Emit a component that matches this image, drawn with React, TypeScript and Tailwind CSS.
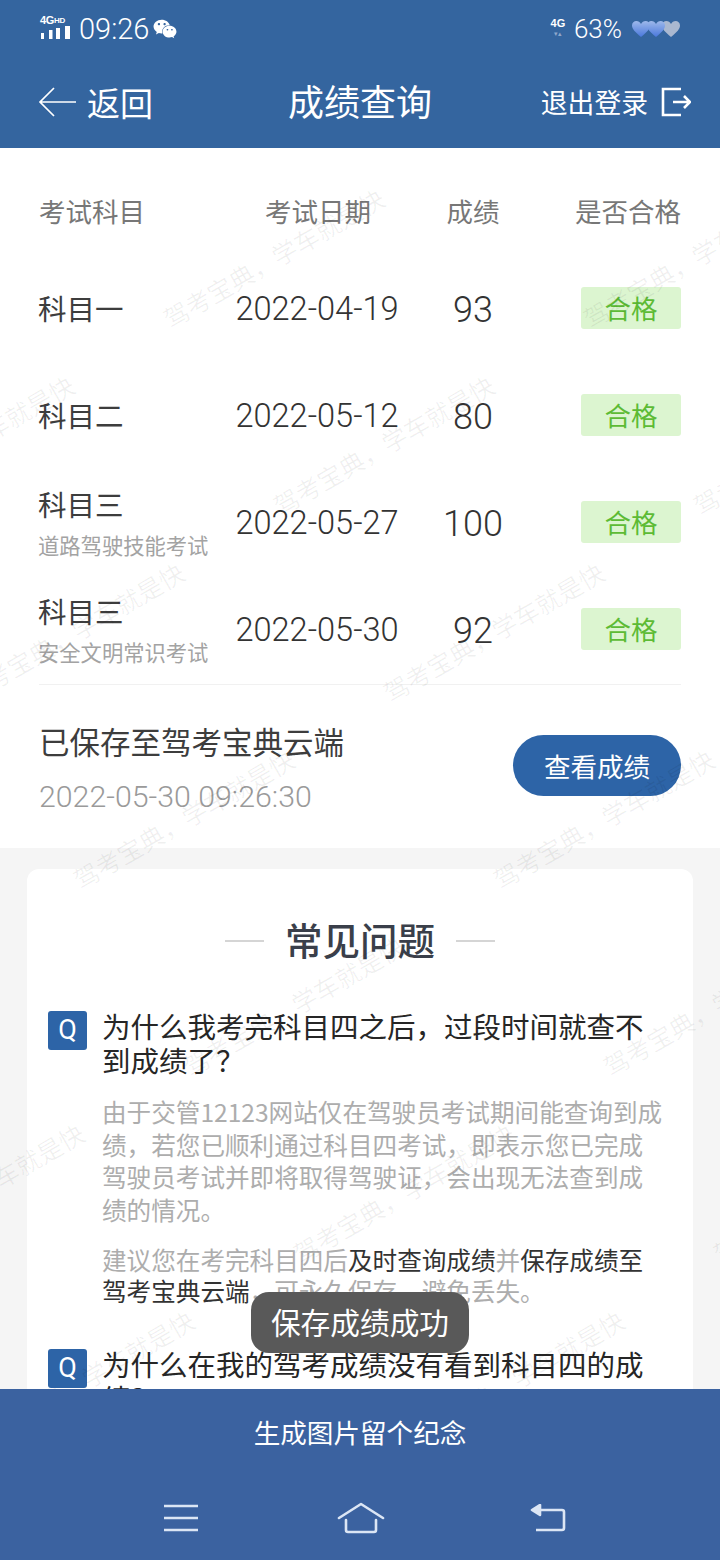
import React from "react";
import { FaWeixin } from "react-icons/fa";

const rows = [
  { name: "科目一", sub: "", date: "2022-04-19", score: "93" },
  { name: "科目二", sub: "", date: "2022-05-12", score: "80" },
  { name: "科目三", sub: "道路驾驶技能考试", date: "2022-05-27", score: "100" },
  { name: "科目三", sub: "安全文明常识考试", date: "2022-05-30", score: "92" },
];

const marks: [number, number][] = [
  [165, 320], [275, 507], [385, 694], [495, 881], [605, 1068], [715, 1255],
  [-145, 507], [-35, 694], [75, 881], [185, 1068], [295, 1255], [405, 1442],
  [585, 320], [695, 507], [-135, 1255], [-25, 1442],
];

function Hearts() {
  const d = "M10 17 C4 12 1 9 1 5.5 C1 2.5 3.2 1 5.3 1 C7.4 1 9 2.2 10 4 C11 2.2 12.6 1 14.7 1 C16.8 1 19 2.5 19 5.5 C19 9 16 12 10 17 Z";
  return (
    <svg width="50" height="20" viewBox="0 0 50 20">
      <defs>
        <linearGradient id="hg" x1="0" y1="0" x2="0" y2="1">
          <stop offset="0" stopColor="#9db8ea" />
          <stop offset="1" stopColor="#4a78dc" />
        </linearGradient>
      </defs>
      <path d={d} fill="#aab8d0" transform="translate(30 1)" />
      <path d={d} fill="url(#hg)" transform="translate(15 1)" />
      <path d={d} fill="url(#hg)" transform="translate(0 1)" />
    </svg>
  );
}

function Row({ r }: { r: (typeof rows)[number] }) {
  return (
    <div className="grid grid-cols-[196px_166px_144px_1fr] items-center h-[107px]">
      <div className="flex flex-col -mt-[3px] -ml-[1px]">
        <span className="text-[28.5px] leading-[38px] text-[#3d3d3d]">{r.name}</span>
        {r.sub && <span className="text-[21.3px] leading-[28px] text-[#a3a3a3] mt-[8px]">{r.sub}</span>}
      </div>
      <span className="text-[32.6px] font-light text-[#333] text-center -ml-[2px] font-[Roboto,sans-serif] whitespace-nowrap">{r.date}</span>
      <span className="text-[36px] font-light text-[#333] text-center font-[Roboto,sans-serif]">{r.score}</span>
      <div className="flex justify-end -mt-[3px]">
        <span className="w-[100px] h-[42px] rounded-[3px] bg-[#dcf5d0] text-[#5dbb35] text-[26.5px] flex items-center justify-center">合格</span>
      </div>
    </div>
  );
}

export default function App() {
  return (
    <div className="relative w-[720px] h-[1560px] overflow-hidden flex flex-col bg-[#f5f5f5] font-['Noto_Sans_CJK_SC','Noto_Sans',sans-serif]">
      <header className="relative z-20 h-[148px] shrink-0 bg-[#34659f] text-white flex flex-col">
        <div className="h-[56px] flex items-center justify-between pl-[40px] pr-[39px] pt-[1px]">
          <div className="flex items-center">
            <div className="flex flex-col w-[31px] mr-[8px] -mt-[3px]">
              <span className="text-[11px] leading-[11px] font-bold font-['Liberation_Sans',sans-serif] tracking-[-0.3px] whitespace-nowrap">4G<span className="text-[8px] align-top">HD</span></span>
              <svg width="31" height="13" viewBox="0 0 31 13">
                <rect x="1" y="7" width="3" height="6" fill="#fff" />
                <rect x="9" y="4" width="3.5" height="9" fill="#fff" />
                <rect x="16" y="2" width="4" height="11" fill="#fff" />
                <rect x="25" y="0" width="5" height="13" fill="#fff" />
              </svg>
            </div>
            <span className="text-[29px] leading-[32px] font-[Roboto,sans-serif] font-light">09:26</span>
            <FaWeixin className="ml-[4px] text-[24px]" />
          </div>
          <div className="flex items-center">
            <div className="flex flex-col items-center mr-[8px] w-[16px] -mt-[3px]">
              <span className="text-[11px] leading-[11px] font-bold font-['Liberation_Sans',sans-serif]">4G</span>
              <span className="text-[7px] leading-[8px] text-[#8fa8cc] whitespace-nowrap">▾▴</span>
            </div>
            <span className="text-[26px] leading-[30px] font-[Roboto,sans-serif] font-light mr-[9px]">63%</span>
            <Hearts />
          </div>
        </div>
        <div className="flex-1 relative flex items-center justify-between pl-[38px] pr-[29px] pb-[1px]">
          <div className="flex items-center">
            <svg width="39" height="32" viewBox="0 0 39 32" fill="none" stroke="#fff" strokeWidth="1.7">
              <path d="M38 16H2M16 2 2 16l14 14" />
            </svg>
            <span className="ml-[10px] text-[33px] leading-[44px]">返回</span>
          </div>
          <span className="absolute left-0 right-0 text-center text-[36px] leading-[46px] -mt-[4px]">成绩查询</span>
          <div className="flex items-center">
            <span className="text-[26.8px] leading-[36px]">退出登录</span>
            <svg width="32" height="32" viewBox="0 0 32 32" fill="none" stroke="#fff" strokeWidth="2.6" className="ml-[11px]">
              <path d="M22 3H4v26h18M14 16h15M25 10l6 6-6 6" />
            </svg>
          </div>
        </div>
      </header>

      <main className="flex-1 min-h-0 overflow-hidden">
        <section className="h-[700px] bg-white px-[39px] pt-[33px]">
          <div className="grid grid-cols-[196px_166px_144px_1fr] items-center h-[60px] text-[26.5px] text-[#777]">
            <span>考试科目</span>
            <span className="text-center">考试日期</span>
            <span className="text-center">成绩</span>
            <span className="text-right whitespace-nowrap">是否合格</span>
          </div>
          <div className="flex flex-col mt-[15px]">
            {rows.map((r, i) => (
              <Row key={i} r={r} />
            ))}
          </div>
          <div className="h-px bg-[#f1f1f1]" />
          <div className="flex items-center justify-between mt-[33px]">
            <div className="flex flex-col">
              <span className="text-[30.5px] leading-[46px] text-[#3d3d3d]">已保存至驾考宝典云端</span>
              <span className="text-[30.3px] leading-[36px] mt-[15px] font-light text-[#9a9a9a] font-[Roboto,sans-serif]">2022-05-30 09:26:30</span>
            </div>
            <button className="w-[168px] h-[61px] rounded-full bg-[#2d64a7] text-white text-[26.5px] -mt-[2px]">查看成绩</button>
          </div>
        </section>

        <section className="mx-[27px] mt-[21px] bg-white rounded-[12px] pl-[21px] pr-[28px] pt-[42px] pb-[40px]">
          <div className="flex items-center justify-center gap-[21px] h-[60px] ml-[7px]">
            <span className="w-[39px] h-[2px] bg-[#d5d5d5]" />
            <h2 className="text-[37.5px] leading-[64px] font-medium text-[#3a3f4a] -mt-[4px]">常见问题</h2>
            <span className="w-[39px] h-[2px] bg-[#d5d5d5]" />
          </div>
          <div className="flex mt-[38px]">
            <span className="w-[39px] h-[39px] shrink-0 rounded-[3px] bg-[#2d64a7] text-white text-[27px] font-[Roboto,sans-serif] flex items-center justify-center mt-[2px]">Q</span>
            <div className="ml-[15px] flex-1 min-w-0">
              <h3 className="text-[28.5px] leading-[34px] text-[#262626]">为什么我考完科目四之后，过段时间就查不到成绩了？</h3>
              <p className="mt-[18px] text-[24.6px] leading-[32.7px] text-[#adadad] w-[565px]">
                由于交管12123网站仅在驾驶员考试期间能查询到成绩，若您已顺利通过科目四考试，即表示您已完成驾驶员考试并即将取得驾驶证，会出现无法查到成绩的情况。
              </p>
              <p className="mt-[18px] text-[24.6px] leading-[31px] text-[#adadad] w-[545px]">
                建议您在考完科目四后<span className="text-[#333]">及时查询成绩</span>并<span className="text-[#333]">保存成绩至驾考宝典云端</span>，可永久保存，避免丢失。
              </p>
            </div>
          </div>
          <div className="flex mt-[41px]">
            <span className="w-[39px] h-[39px] shrink-0 rounded-[3px] bg-[#2d64a7] text-white text-[27px] font-[Roboto,sans-serif] flex items-center justify-center mt-[2px]">Q</span>
            <h3 className="ml-[15px] flex-1 text-[28.5px] leading-[34px] text-[#262626]">为什么在我的驾考成绩没有看到科目四的成绩？</h3>
          </div>
        </section>
      </main>

      {marks.map(([x, y], i) => (
        <div
          key={i}
          className="absolute z-10 origin-left -rotate-30 text-[25px] leading-[30px] text-black/[0.06] whitespace-nowrap pointer-events-none"
          style={{ left: x, top: y - 15 }}
        >
          驾考宝典，学车就是快
        </div>
      ))}

      <div className="absolute z-30 left-[251px] top-[1292px] w-[218px] h-[61px] rounded-[18px] bg-[#595959] text-white text-[29.7px] flex items-center justify-center whitespace-nowrap">
        保存成绩成功
      </div>

      <footer className="relative z-20 h-[171px] shrink-0 bg-[#3b62a0] flex flex-col items-center">
        <div className="h-[85px] flex items-center text-white text-[26.6px] shrink-0">生成图片留个纪念</div>
        <div className="w-full flex items-center justify-between pl-[164px] pr-[154px] pt-[28px]">
          <svg width="34" height="28" viewBox="0 0 34 28" fill="none" stroke="#dce6f5" strokeWidth="2.6">
            <path d="M0 2h34M0 14h34M0 26h34" />
          </svg>
          <svg width="48" height="32" viewBox="0 0 48 32" fill="none" stroke="#dce6f5" strokeWidth="2.6" strokeLinecap="round" strokeLinejoin="round" className="-translate-x-[3px]">
            <path d="M2 16 24 2l22 14M9 18v10a2 2 0 0 0 2 2h26a2 2 0 0 0 2-2V18" />
          </svg>
          <svg width="36" height="28" viewBox="0 0 36 28" fill="none" stroke="#dce6f5" strokeWidth="2.6" strokeLinejoin="round">
            <path d="M10 6h22a2 2 0 0 1 2 2v16a2 2 0 0 1-2 2H6" />
            <path d="M2 6 10 1v10Z" fill="#dce6f5" />
          </svg>
        </div>
      </footer>
    </div>
  );
}
